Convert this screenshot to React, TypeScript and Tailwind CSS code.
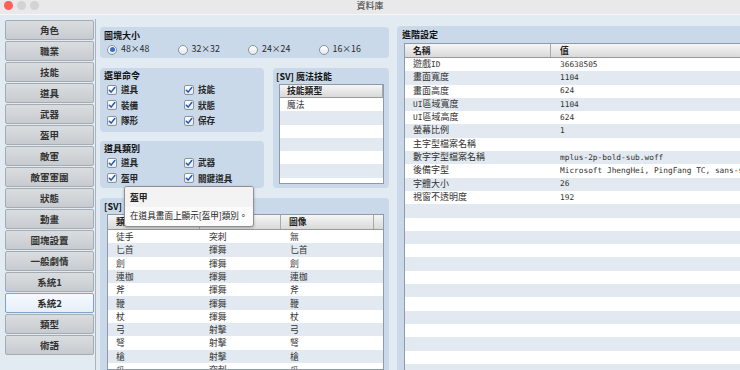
import React from "react";

const sidebar = ["角色","職業","技能","道具","武器","盔甲","敵軍","敵軍軍團","狀態","動畫","圖塊設置","一般劇情","系統1","系統2","類型","術語"];

const weapons: [string, string, string][] = [
  ["徒手","突刺","無"],["匕首","揮舞","匕首"],["劍","揮舞","劍"],["連枷","揮舞","連枷"],["斧","揮舞","斧"],["鞭","揮舞","鞭"],["杖","揮舞","杖"],["弓","射擊","弓"],["弩","射擊","弩"],["槍","射擊","槍"],["爪","突刺","爪"],["拳套","突刺","拳套"],
];

const M = ({ children }: { children: React.ReactNode }) => <span className="text-[7.8px]">{children}</span>;

const settings: [React.ReactNode, string][] = [
  [<>遊戲<M>ID</M></>, "36638505"],
  ["畫面寬度", "1104"],
  ["畫面高度", "624"],
  [<><M>UI</M>區域寬度</>, "1104"],
  [<><M>UI</M>區域高度</>, "624"],
  ["螢幕比例", "1"],
  ["主字型檔案名稱", ""],
  ["數字字型檔案名稱", "mplus-2p-bold-sub.woff"],
  ["後備字型", "Microsoft JhengHei, PingFang TC, sans-serif"],
  ["字體大小", "26"],
  ["視窗不透明度", "192"],
];

function Check({ label }: { label: string }) {
  return (
    <div className="flex items-center h-[15.5px]">
      <span className="w-[10px] h-[10px] shrink-0 rounded-[2px] border border-[#8d939a] bg-linear-to-b from-white to-[#e6ebf0] flex items-center justify-center">
        <svg width="8" height="8" viewBox="0 0 8 8">
          <path d="M1.3 4.2 L3.1 6.1 L6.8 1.5" fill="none" stroke="#2456b3" strokeWidth="1.5" strokeLinecap="round" strokeLinejoin="round" />
        </svg>
      </span>
      <span className="ml-[4px] text-[8.6px] leading-none font-semibold text-[#262626]">{label}</span>
    </div>
  );
}

function Radio({ label, on }: { label: string; on?: boolean }) {
  return (
    <div className="flex items-center w-[70.5px]">
      <span className="w-[10px] h-[10px] shrink-0 rounded-full border border-[#8d939a] bg-linear-to-b from-white to-[#e4e9ee] flex items-center justify-center">
        {on && <span className="w-[5px] h-[5px] rounded-full bg-[#3b6cc6]" />}
      </span>
      <span className="ml-[4px] text-[8.8px] leading-none text-[#2a2a2a]">{label}</span>
    </div>
  );
}

function Hdr({ className, children }: { className: string; children?: React.ReactNode }) {
  return (
    <div className={"flex items-center border-r border-[#a9a9a9] bg-linear-to-b from-[#f6f6f6] to-[#d9d9d9] text-[8.8px] font-semibold text-[#222] " + className}>
      {children}
    </div>
  );
}

export default function App() {
  const emptyRight = Array.from({ length: 14 });
  return (
    <div className="relative w-[740px] h-[370px] overflow-hidden bg-[#e2eaf2] flex flex-col font-['Noto_Sans_CJK_TC','Noto_Sans',sans-serif]">
      {/* title bar */}
      <div className="relative h-[15px] shrink-0 bg-[#e9e9e9] border-b border-[#f4f6f8] flex items-start pt-px gap-[4px] pl-[4px]">
        <span className="w-[9px] h-[9px] rounded-full bg-[#fe5f57]" />
        <span className="w-[9px] h-[9px] rounded-full bg-[#d3d3d3]" />
        <span className="w-[9px] h-[9px] rounded-full bg-[#d3d3d3]" />
        <span className="absolute left-0 right-0 top-0 h-[11px] flex items-center justify-center text-[9px] text-[#3a3a3a]">資料庫</span>
      </div>

      <div className="flex flex-1 min-h-0">
        {/* sidebar */}
        <div className="mt-[4px] ml-[4px] w-[92px] shrink-0 p-px border-r border-[#aab4be] flex flex-col gap-px">
          {sidebar.map((s) =>
            s === "系統2" ? (
              <div key={s} className="h-[20px] shrink-0 rounded-[2px] border border-[#7aa3cf] bg-linear-to-b from-[#f6faff] to-[#e6eef7] flex items-center justify-center text-[9.5px] font-semibold text-[#2a2a2a]">
                {s}
              </div>
            ) : (
              <div key={s} className="h-[20px] shrink-0 rounded-[2px] border border-[#a4abb2] bg-linear-to-b from-[#dadde0] to-[#c7cbcf] flex items-center justify-center text-[9.5px] font-semibold text-[#333]">
                {s}
              </div>
            )
          )}
        </div>

        {/* middle column */}
        <div className="mt-[12px] ml-[4px] w-[289px] shrink-0 flex flex-col min-h-0">
          <div className="h-[31px] shrink-0 rounded-[4px] bg-[#c9d9ea] pl-[4px] pt-[2px]">
            <div className="h-[13px] flex items-center text-[9px] font-bold text-[#111]">圖塊大小</div>
            <div className="flex items-center h-[11px] mt-[2px] pl-[3px]">
              <Radio label="48×48" on />
              <Radio label="32×32" />
              <Radio label="24×24" />
              <Radio label="16×16" />
            </div>
          </div>

          <div className="mt-[10px] shrink-0 flex gap-[9px] h-[120px]">
            <div className="w-[164px] flex flex-col">
              <div className="h-[64px] shrink-0 rounded-[4px] bg-[#c9d9ea] pt-[2px]">
                <div className="h-[12px] pl-[4px] flex items-center text-[9px] font-bold text-[#111]">選單命令</div>
                <div className="grid grid-cols-[77px_1fr] pl-[7px]">
                  <Check label="道具" /><Check label="技能" />
                  <Check label="裝備" /><Check label="狀態" />
                  <Check label="隊形" /><Check label="保存" />
                </div>
              </div>
              <div className="mt-[9px] h-[47px] shrink-0 rounded-[4px] bg-[#c9d9ea] pt-[2px]">
                <div className="h-[12px] pl-[4px] flex items-center text-[9px] font-bold text-[#111]">道具類別</div>
                <div className="grid grid-cols-[77px_1fr] pl-[7px]">
                  <Check label="道具" /><Check label="武器" />
                  <Check label="盔甲" /><Check label="關鍵道具" />
                </div>
              </div>
            </div>
            <div className="w-[116px] rounded-[4px] bg-[#c9d9ea] pt-[3px] pl-[3px] pr-[5px] pb-[4px] flex flex-col">
              <div className="h-[12px] flex items-center text-[9px] font-bold text-[#111]">[SV] 魔法技能</div>
              <div className="mt-px ml-[3px] flex-1 min-h-0 border border-[#8e9aa6] bg-white overflow-hidden">
                <Hdr className="h-[13px] pl-[7px] border-b border-b-[#9a9a9a]">技能類型</Hdr>
                {Array.from({ length: 7 }).map((_, i) => (
                  <div key={i} className={"h-[13.3px] pl-[7px] flex items-center text-[8.8px] text-[#333] " + (i % 2 ? "bg-[#e2e9f0]" : "bg-white")}>
                    {i === 0 ? "魔法" : ""}
                  </div>
                ))}
              </div>
            </div>
          </div>

          <div className="mt-[10px] flex-1 min-h-0 rounded-t-[4px] bg-[#c9d9ea] pt-[2px] pl-[4px] pr-[5px] flex flex-col">
            <div className="h-[14px] shrink-0 flex items-center text-[9px] font-bold text-[#111]">[SV] 武器類型</div>
            <div className="ml-[3px] flex-1 min-h-0 border border-[#8e9aa6] bg-white overflow-hidden">
              <div className="flex h-[15px] border-b border-[#9a9a9a]">
                <Hdr className="w-[92px] pl-[8px]">類型</Hdr>
                <Hdr className="w-[81px] pl-[8px]">動作</Hdr>
                <Hdr className="w-[93px] pl-[8px]">圖像</Hdr>
                <Hdr className="flex-1 border-r-0" />
              </div>
              {weapons.map((w, i) => (
                <div key={i} className={"flex h-[13.3px] items-center text-[8.8px] text-[#333] " + (i % 2 ? "bg-[#e2e9f0]" : "bg-white")}>
                  <span className="w-[92px] pl-[8px]">{w[0]}</span>
                  <span className="w-[81px] pl-[9px]">{w[1]}</span>
                  <span className="w-[93px] pl-[9px]">{w[2]}</span>
                </div>
              ))}
            </div>
          </div>
        </div>

        {/* right panel */}
        <div className="mt-[11px] ml-[8px] flex-1 min-h-0 rounded-tl-[4px] bg-[#c9d9ea] flex flex-col pl-[5px]">
          <div className="h-[17px] shrink-0 flex items-center text-[9px] font-bold text-[#111]">進階設定</div>
          <div className="ml-[2px] flex-1 min-h-0 border-l border-t border-[#8e9aa6] bg-white overflow-hidden">
            <div className="flex h-[14px] border-b border-[#9a9a9a]">
              <Hdr className="w-[146px] pl-[8px]">名稱</Hdr>
              <Hdr className="flex-1 pl-[9px] border-r-0">值</Hdr>
            </div>
            {settings.map(([k, v], i) => (
              <div key={i} className={"flex h-[13.3px] items-center text-[9px] text-[#333] whitespace-nowrap " + (i % 2 ? "bg-[#e2e9f0]" : "bg-white")}>
                <span className="w-[146px] pl-[8px] font-['DejaVu_Sans_Mono','Noto_Sans_CJK_TC',monospace]">{k}</span>
                <span className="pl-[9px] text-[7.8px] font-['DejaVu_Sans_Mono',monospace]">{v}</span>
              </div>
            ))}
            {emptyRight.map((_, j) => {
              const i = settings.length + j;
              return <div key={i} className={"h-[13.3px] " + (i % 2 ? "bg-[#e2e9f0]" : "bg-white")} />;
            })}
          </div>
        </div>
      </div>

      {/* tooltip */}
      <div className="absolute left-[124px] top-[186px] w-[130px] h-[41px] rounded-[3px] border border-[#8f8f8f] bg-[#fbfbfb] shadow-[0_1px_3px_rgba(0,0,0,0.25)] overflow-hidden flex flex-col">
        <div className="h-[20px] shrink-0 pl-[5px] pt-px flex items-center bg-[#f3f3f3] text-[8.8px] font-semibold text-[#222]">盔甲</div>
        <div className="flex-1 pl-[5px] pb-[3px] flex items-center text-[8.6px] text-[#222] whitespace-nowrap">在道具畫面上顯示[盔甲]類別。</div>
      </div>
    </div>
  );
}
